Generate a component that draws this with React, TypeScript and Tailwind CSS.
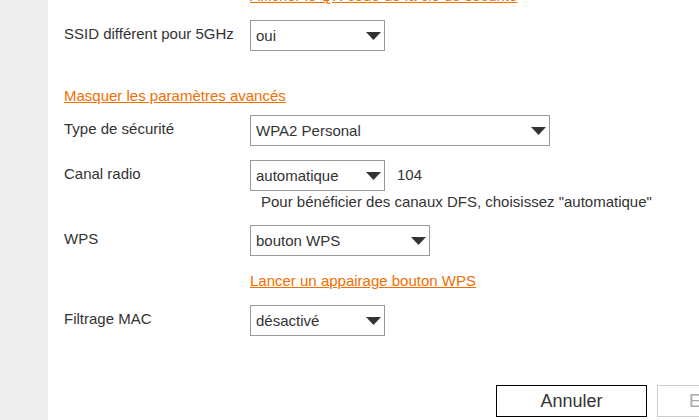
import React from "react";

function Select({ value, width }: { value: string; width: string }) {
  return (
    <div
      className={`${width} h-[31px] shrink-0 border border-[#999999] bg-white flex items-center justify-between pl-[5px] pr-[3px] text-[15px] leading-[18px] text-[#333333]`}
    >
      <span>{value}</span>
      <svg width="15" height="8" viewBox="0 0 15 8" className="block">
        <polygon points="0,0 15,0 7.5,8" fill="#333333" />
      </svg>
    </div>
  );
}

function Row({ label, children, className = "" }: { label: string; children: React.ReactNode; className?: string }) {
  return (
    <div className={`flex items-start ${className}`}>
      <div className="w-[186px] shrink-0 pt-[5px] text-[15px] leading-[18px] text-[#333333]">{label}</div>
      {children}
    </div>
  );
}

export default function App() {
  return (
    <div
      className="w-[699px] h-[420px] overflow-hidden flex bg-white"
      style={{ fontFamily: '"Liberation Sans", Arial, sans-serif' }}
    >
      <div className="w-[48px] shrink-0 bg-[#eeeeee]" />
      <div className="flex-1 min-w-0 pl-[16px] flex flex-col">
        <div className="mt-[-13px] h-[18px] pl-[186px] text-[15px] leading-[18px] whitespace-nowrap">
          <a className="text-[#f16e00] underline">Afficher le QR code de la clé de sécurité</a>
        </div>

        <Row label="SSID différent pour 5GHz" className="mt-[15px]">
          <Select value="oui" width="w-[135px]" />
        </Row>

        <div className="mt-[36px] h-[18px] text-[15px] leading-[18px] whitespace-nowrap">
          <a className="text-[#f16e00] underline">Masquer les paramètres avancés</a>
        </div>

        <Row label="Type de sécurité" className="mt-[10px]">
          <Select value="WPA2 Personal" width="w-[300px]" />
        </Row>

        <Row label="Canal radio" className="mt-[14px]">
          <Select value="automatique" width="w-[135px]" />
          <span className="ml-[12px] pt-[6px] text-[15px] leading-[18px] text-[#333333]">104</span>
        </Row>

        <div className="mt-[2px] pl-[197px] h-[18px] text-[15px] leading-[18px] text-[#333333] whitespace-nowrap">
          Pour bénéficier des canaux DFS, choisissez "automatique"
        </div>

        <Row label="WPS" className="mt-[14px]">
          <Select value="bouton WPS" width="w-[180px]" />
        </Row>

        <div className="mt-[16px] pl-[186px] h-[18px] text-[15px] leading-[18px] whitespace-nowrap">
          <a className="text-[#f16e00] underline">Lancer un appairage bouton WPS</a>
        </div>

        <Row label="Filtrage MAC" className="mt-[15px]">
          <Select value="désactivé" width="w-[135px]" />
        </Row>

        <div className="mt-[49px] ml-[432px] flex gap-[10px]">
          <button className="w-[151px] h-[32px] shrink-0 border border-black bg-white text-[18px] text-[#333333]">
            Annuler
          </button>
          <button className="w-[151px] h-[32px] shrink-0 border border-[#cccccc] bg-white text-[18px] text-[#aaaaaa] text-left pl-[31px]">
            Enregistrer
          </button>
        </div>
      </div>
    </div>
  );
}
